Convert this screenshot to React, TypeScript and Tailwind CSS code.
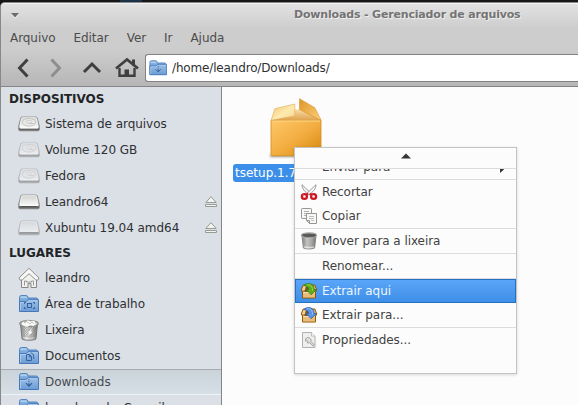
import type { ReactNode } from "react";

function DriveIcon({ faded = false, platter = false }: { faded?: boolean; platter?: boolean }) {
  return (
    <svg width="24" height="24" viewBox="0 0 24 24" className={faded ? "opacity-50" : ""}>
      <defs>
        <linearGradient id="driveTop" x1="0" y1="0" x2="0" y2="1">
          <stop offset="0" stopColor="#d2d2d0" />
          <stop offset="1" stopColor="#fafaf9" />
        </linearGradient>
        <linearGradient id="driveBase" x1="0" y1="0" x2="0" y2="1">
          <stop offset="0" stopColor="#c5c5c3" />
          <stop offset="1" stopColor="#5c5d5b" />
        </linearGradient>
      </defs>
      <path d="M5.200 5h13.600c.8 0 1.200.3 1.500 1l2 8v3.500c0 .8-.4 1.300-1.300 1.300H3c-.9 0-1.300-.5-1.300-1.300V14l2-8c.3-.7.700-1 1.500-1z" fill="url(#driveBase)" stroke="#858684" strokeWidth=".8" />
      <path d="M5.500 5.700h13c.5 0 .8.200 1 .8l1.800 8c.2 1-.2 1.500-1 1.500H3.700c-.8 0-1.200-.5-1-1.500l1.800-8c.2-.6.500-.8 1-.8z" fill="url(#driveTop)" stroke="#fff" strokeWidth=".7" />
      {platter && (
        <g fill="none" stroke="#b8b8b6" strokeWidth=".7">
          <ellipse cx="12" cy="10.300" rx="6.800" ry="3.800" fill="#e9e9e8" />
          <ellipse cx="12" cy="9.700" rx="3" ry="1.400" stroke="#c5c5c3" />
          <path d="M12 11.500h5" />
        </g>
      )}
      <path d="M3.200 16.500h17.600" stroke={platter ? "#c4c4c2" : "#4c4d4b"} strokeWidth=".9" />
    </svg>
  );
}

function EjectIcon() {
  return (
    <svg width="14" height="14" viewBox="0 0 14 14" fill="#f3f3ef" stroke="#999b94" strokeWidth="1">
      <path d="M7 1.700l5.200 5.800H1.800z" />
      <path d="M1.500 9.500h11v2h-11z" />
    </svg>
  );
}

function HomePlaceIcon() {
  return (
    <svg width="24" height="24" viewBox="0 0 24 24" strokeLinejoin="round">
      <path d="M4.500 13v8.500H11v-4h3v4h5.500V13L12 6z" fill="#f1f1ef" stroke="#858783" />
      <path d="M7.500 19.500v-4.500h2v1h5v-1h2v4.500" fill="none" stroke="#8e908b" strokeWidth=".9" />
      <path d="M12 2.300L2 12l1.300 2.300 2-.5L12 7.700l6.700 6.100 2 .5L22 12z" fill="#f8f8f6" stroke="#8e908b" />
    </svg>
  );
}

type FolderKind = "desktop" | "documents" | "downloads" | "plain";

function FolderIcon({ kind, small = false }: { kind: FolderKind; small?: boolean }) {
  const size = small ? 18 : 24;
  return (
    <svg width={size} height={size} viewBox={small ? "1.500 2.300 20.500 19" : "0 0 24 24"}>
      <defs>
        <linearGradient id="folderFront" x1="0" y1="0" x2="0" y2="1">
          <stop offset="0" stopColor="#9dc0e8" />
          <stop offset="1" stopColor="#6b9bd3" />
        </linearGradient>
      </defs>
      <path d="M2.500 19V5.500c0-1.200.6-2 1.800-2h4.900c1 0 1.800 1 1.800 2.500h8.500c.8 0 1 .5 1 1.200V19z" fill="#7ca9dc" stroke="#4b7bb8" strokeWidth=".9" />
      <path d="M3.300 6.300V5c0-.4.400-.7.900-.7h4.700c.7 0 1.200.8 1.400 2z" fill="#a9cfea" />
      <path d="M2.500 9.500h6.300c1.200 0 1.700-1.800 3-1.800h9.700v11.800h-19z" fill="url(#folderFront)" stroke="#3f73b4" strokeWidth=".9" />
      <path d="M3.500 18.500v-8h5.600c1.400 0 1.700-1.800 3-1.800h8.400" fill="none" stroke="#bdd6f2" strokeWidth=".7" />
      {kind === "downloads" && (
        <path d="M12 9.200v1M12 11.200v1M12 13.200v3M9 13.200l3 3 3-3" fill="none" stroke="#2f5c98" strokeWidth="1.050" />
      )}
      {kind === "desktop" && (
        <g fill="none" stroke="#2f5c98" strokeWidth=".9">
          <path d="M7.500 12v-1.500H9M17.500 12v-1.500H16M7.500 15v1.500H9M17.500 15v1.500H16" />
          <rect x="10.500" y="11.500" width="4" height="4" />
        </g>
      )}
      {kind === "documents" && (
        <path d="M9.500 10.500h3l2 2v4h-5zM12.300 10.500v2.300h2.200M13.500 8.900c2.200 0 3.200 1.500 3.200 3.900v2.200" fill="none" stroke="#2f5c98" strokeWidth=".9" />
      )}
    </svg>
  );
}

function TrashIcon({ full = false }: { full?: boolean }) {
  return (
    <svg width={full ? 24 : 18} height={full ? 24 : 18} viewBox={full ? "0 0 24 24" : "1 1.500 22 22"}>
      <defs>
        <linearGradient id="binBody">
          <stop offset="0" stopColor="#8a8a89" />
          <stop offset=".35" stopColor="#f0f0ef" />
          <stop offset=".7" stopColor="#c4c4c2" />
          <stop offset="1" stopColor="#777" />
        </linearGradient>
        <pattern id="binMesh" width="2.400" height="2.400" patternUnits="userSpaceOnUse">
          <path d="M0 0l2.400 2.400M2.400 0L0 2.400" stroke="#666" strokeWidth=".4" />
        </pattern>
      </defs>
      <path d="M3.500 6l1.600 15c1.700 1.600 12.200 1.600 13.800 0l1.600-15z" fill="url(#binBody)" stroke="#6b6c6a" strokeWidth=".9" />
      <path d="M4.800 9l1.200 9.500c2 1.300 10.500 1.300 12.300 0L19.300 9z" fill="url(#binMesh)" />
      <ellipse cx="12" cy="5.500" rx="9.200" ry="2.900" fill={full ? "#e6e6e3" : "#5a5b59"} stroke={full ? "#858783" : "#a1a2a0"} strokeWidth="1.300" />
      {full ? (
        <g stroke="#999a96" strokeWidth=".6" fill="#fbfbf9">
          <path d="M4 6.500l1.500-3 3 .3 2-1.800 3 1 4-.8 2 4.300-3 1.700-3.500-.5-3 1.500-3-1z" />
          <path d="M7 5l3-1.500L13 6l2-2 2 1.500" fill="none" />
          <path d="M15 10l-4 4.500 1.500.5-2 3.500 5-4.500-1.700-.6z" stroke="none" />
        </g>
      ) : (
        <path d="M5.500 19.700c2 1.300 11 1.300 13 0" fill="none" stroke="#e0e0de" />
      )}
    </svg>
  );
}

function BoxIcon() {
  return (
    <svg width="56" height="64" viewBox="0 0 56 64" className="block">
      <defs>
        <linearGradient id="boxFront" x1="0" y1="0" x2="1" y2="1">
          <stop offset="0" stopColor="#ffc669" />
          <stop offset=".5" stopColor="#f3ae42" />
          <stop offset="1" stopColor="#d5860b" />
        </linearGradient>
        <linearGradient id="flapLeft" x1="0" y1="0" x2="1" y2="1">
          <stop offset="0" stopColor="#f4c66d" />
          <stop offset=".55" stopColor="#fdeab0" />
          <stop offset="1" stopColor="#f5d58c" />
        </linearGradient>
        <linearGradient id="flapRight" x1="0" y1="0" x2="1" y2="1">
          <stop offset="0" stopColor="#dc9526" />
          <stop offset="1" stopColor="#ffd07c" />
        </linearGradient>
        <linearGradient id="boxInside" x1="0" y1="0" x2="0" y2="1">
          <stop offset="0" stopColor="#f8dda6" />
          <stop offset="1" stopColor="#dfa14a" />
        </linearGradient>
        <filter id="boxShade" x="-.2" y="-2" width="1.400" height="5">
          <feGaussianBlur stdDeviation="1" />
        </filter>
      </defs>
      <rect x="2" y="57.500" width="51" height="2.500" fill="#444" opacity=".55" filter="url(#boxShade)" />
      <path d="M3 23.500l5-11h37l8 11z" fill="url(#boxInside)" />
      <path d="M3 23.500h50v34c0 .8-.5 1.300-1.300 1.300H4.300c-.8 0-1.300-.5-1.300-1.300z" fill="url(#boxFront)" stroke="#d88b19" strokeWidth=".8" />
      <path d="M4 24h48" stroke="#ffdc90" />
      <path d="M6.800 11.700l20-4.700v12L3.200 23.300z" fill="url(#flapLeft)" stroke="#dfab56" strokeWidth=".6" />
      <path d="M31.500 1.700l15.300 9L53.200 23.300 31.500 12.500z" fill="url(#flapRight)" stroke="#d8942c" strokeWidth=".6" />
    </svg>
  );
}

function ScissorsIcon() {
  return (
    <svg width="18" height="18" viewBox="0 0 18 18" className="block">
      <path d="M2 1.700l9 8.600-1.700 1.500C5.200 9.300 2 6 2 1.700z" fill="#f1f1ef" stroke="#90928d" strokeWidth=".9" />
      <path d="M16 1.700l-9 8.600 1.700 1.500C12.800 9.300 16 6 16 1.700z" fill="#f8f8f6" stroke="#90928d" strokeWidth=".9" />
      <g fill="none" stroke="#cf1620" strokeWidth="2.300">
        <ellipse cx="4.400" cy="13.500" rx="2.500" ry="2.400" />
        <ellipse cx="13.600" cy="13.500" rx="2.500" ry="2.400" />
        <path d="M6 11.800l2.200-1.300M12 11.800l-2.200-1.300" strokeWidth="1.800" />
      </g>
      <path d="M2.600 12.500l1-.8M11.800 12.500l1-.8" stroke="#ff7b7b" strokeWidth=".8" />
    </svg>
  );
}

function CopyIcon() {
  return (
    <svg width="18" height="18" viewBox="0 0 18 18" className="block" fill="#f8f8f7" stroke="#969893">
      <rect x="1.500" y="1.500" width="10" height="10" rx=".7" />
      <path d="M4 4.500h5M4 6.500h4M4 8.500h3" stroke="#b3b4b1" />
      <path d="M6.500 6.500h10v10h-7l-3-3z" />
      <path d="M9 9.500h5M9 11.500h5M11 13.500h3" stroke="#bebfbc" />
      <path d="M6.500 13.500h3v3z" fill="#ddd" />
    </svg>
  );
}

function ExtractIcon({ green = false }: { green?: boolean }) {
  return (
    <svg width="18" height="18" viewBox="0 0 18 18" className="block">
      <path d="M3.200 3h11.600l2 5-1.300 2v6h-13v-6L1.200 8z" fill="#c48a3a" stroke="#8f5902" strokeLinejoin="round" />
      <path d="M4.500 4.500h9V10h-9z" fill="#7b571f" />
      <path d="M3.500 3.700L1.800 8.200h3l1.200-4.500zM14.500 3.700l1.700 4.500h-3L12 3.700z" fill="#efcf98" />
      <path d="M3 10h12v5.500H3z" fill="#e8bd7b" />
      <path d="M3.500 10.500h11" stroke="#fae3ba" />
      <path
        d="M4 3.500C6 .5 13.500.8 14 6v1.500h2.300L11.200 12.700 6 7.500h2.700C8.700 5 6.500 3.800 4 3.500z"
        fill={green ? "#5fae20" : "#5c93e8"}
        stroke={green ? "#2f7a0c" : "#2a5fb0"}
        strokeWidth=".8"
      />
      <path d="M6.500 3c3-.8 5.500.5 6 3.500v2" fill="none" stroke={green ? "#a2e45b" : "#a4caff"} strokeWidth=".8" />
    </svg>
  );
}

function PropertiesIcon() {
  return (
    <svg width="18" height="18" viewBox="0 0 18 18" className="block">
      <path d="M2.500 1.500h9l3.500 3.500v11.500H2.500z" fill="#eeeeed" stroke="#b0b1ae" />
      <path d="M11.500 1.500V5H15" fill="#fff" stroke="#bcbdba" />
      <path d="M7.500 6.500c-1.800.5-2.500 2.300-1.700 3.800l1-.8 1.200 1.200-.8 1c1 .5 1.900.3 2.600-.1l3.300 3.500 1.300-1.200-3.400-3.400c.5-1.800-.7-3.900-3.500-4z" fill="#e2e2e1" stroke="#979994" strokeWidth=".9" />
    </svg>
  );
}

function PlaceRow({ icon, label, eject = false, selected = false }: { icon: ReactNode; label: string; eject?: boolean; selected?: boolean }) {
  return (
    <div
      className={
        "flex h-[26px] shrink-0 items-center pl-[16px] pr-[3px] " +
        (selected ? "border-y border-t-[#a5abb0] border-b-[#f0f3f5] bg-linear-to-b from-[#cbd3da] to-[#d7dfe6] text-[#484b4e]" : "")
      }
    >
      <span className="w-[28px] shrink-0">{icon}</span>
      <span className="flex-1 whitespace-nowrap">{label}</span>
      {eject && <EjectIcon />}
    </div>
  );
}

function MenuItem({ icon, label, selected = false }: { icon?: ReactNode; label: string; selected?: boolean }) {
  return (
    <div
      className={
        "flex h-[24px] shrink-0 items-center " +
        (selected ? "bg-linear-to-b from-[#5aa6fa] to-[#3e8ee6] text-[#eef6ff] outline outline-1 -outline-offset-1 outline-[#2470c4]" : "")
      }
    >
      <span className="w-[27px] shrink-0 pl-[5px]">{icon}</span>
      <span className="whitespace-nowrap">{label}</span>
    </div>
  );
}

function Separator() {
  return <div className="h-px shrink-0 bg-[#dcdcdc]" />;
}

function ContextMenu() {
  return (
    <div className="absolute left-[294px] top-[147px] flex h-[227px] w-[223px] flex-col overflow-hidden border border-[#c3c3c3] bg-[#fcfcfc] tracking-[-0.06px] text-[#424242] shadow-[0_1px_3px_rgba(0,0,0,0.15)]">
      <div className="flex h-[20px] shrink-0 justify-center pt-[5px]">
        <svg width="10" height="6" viewBox="0 0 10 6"><path d="M5 .5L10 5.500H0z" fill="#353535" /></svg>
      </div>
      <Separator />
      <div className="flex h-[10px] shrink-0 items-end justify-between overflow-hidden pb-[5px] pl-[27px] pr-[12px] leading-[14px]">
        <span>Enviar para</span>
        <svg width="4" height="8" viewBox="0 0 4 8"><path d="M0 0l4 3.500L0 7z" fill="#353535" /></svg>
      </div>
      <Separator />
      <MenuItem icon={<ScissorsIcon />} label="Recortar" />
      <MenuItem icon={<CopyIcon />} label="Copiar" />
      <Separator />
      <MenuItem icon={<TrashIcon />} label="Mover para a lixeira" />
      <Separator />
      <MenuItem label="Renomear..." />
      <Separator />
      <MenuItem icon={<ExtractIcon green />} label="Extrair aqui" selected />
      <MenuItem icon={<ExtractIcon />} label="Extrair para..." />
      <Separator />
      <MenuItem icon={<PropertiesIcon />} label="Propriedades..." />
    </div>
  );
}

export default function App() {
  return (
    <div className="relative flex h-[405px] w-[578px] flex-col overflow-hidden bg-[#171819] font-['DejaVu_Sans',sans-serif] text-[12px] leading-[16px] text-[#2e3133]">
      <div className="flex h-[2px] shrink-0">
        <div className="w-[120px]" />
        <div className="w-[22px] bg-[#1c3347]" />
      </div>
      <div className="flex min-h-0 flex-1 flex-col rounded-tl-[5px] border-l border-t border-[#888] bg-[#cdcdcd]">
        <header className="flex h-[24px] shrink-0 items-center rounded-tl-[4px] border-t border-[#f4f4f4] bg-linear-to-b from-[#e2e2e2] to-[#cecece] pl-[10px]">
          <svg width="8" height="6" viewBox="0 0 8 6">
            <path d="M0 1h8L4 5.500z" fill="#f4f4f4" />
            <path d="M0 0h8L4 4.500z" fill="#6c6c6c" />
          </svg>
          <h1 className="ml-[275px] whitespace-nowrap pb-px text-[11px] font-bold tracking-[-0.17px] text-[#747474] [text-shadow:1px_1px_0_#eee]">
            Downloads - Gerenciador de arquivos
          </h1>
        </header>
        <nav className="flex h-[22px] shrink-0 items-center gap-[18px] pl-[9px] tracking-[-0.06px] text-[#4c4c4c]">
          <span>Arquivo</span>
          <span>Editar</span>
          <span>Ver</span>
          <span>Ir</span>
          <span>Ajuda</span>
        </nav>
        <div className="flex h-[37px] shrink-0 items-center bg-linear-to-b from-[#cdcdcd] to-[#b6b6b6] pl-[12px]">
          <svg width="132" height="26" viewBox="0 0 132 26" fill="none" stroke="#3f3f3f" strokeWidth="3">
            <path d="M14.500 4.500L6.500 13l8 8.500" />
            <path d="M38.500 4.500l8 8.500-8 8.500" stroke="#8e8e8e" />
            <path d="M71 17l8-8 8 8" />
            <path d="M103 13.500l11-9 11 9" strokeWidth="2.800" />
            <path d="M106.500 13v7.800h15V13" strokeWidth="2.400" />
            <path d="M111.500 14.500h4.500V21h-4.500zM119 4.500h3v6h-3z" fill="#3f3f3f" stroke="none" />
          </svg>
          <div className="flex h-[28px] flex-1 items-center rounded-l-[3px] border border-r-0 border-[#838383] bg-white pl-[3px]">
            <FolderIcon kind="downloads" small />
            <span className="ml-[5px] tracking-[-0.16px]">/home/leandro/Downloads/</span>
          </div>
        </div>
        <div className="flex min-h-0 flex-1 border-t border-[#858585]">
          <aside className="flex w-[221px] shrink-0 flex-col overflow-hidden border-r border-[#858585] bg-[#dbdfe6] tracking-[-0.03px]">
            <h2 className="flex h-[24px] shrink-0 items-center pl-[8px] font-bold text-[#222426]">DISPOSITIVOS</h2>
            <PlaceRow icon={<DriveIcon platter />} label="Sistema de arquivos" />
            <PlaceRow icon={<DriveIcon platter faded />} label="Volume 120 GB" />
            <PlaceRow icon={<DriveIcon platter faded />} label="Fedora" />
            <PlaceRow icon={<DriveIcon />} label="Leandro64" eject />
            <PlaceRow icon={<DriveIcon faded />} label="Xubuntu 19.04 amd64" eject />
            <h2 className="flex h-[24px] shrink-0 items-center pl-[8px] font-bold text-[#222426]">LUGARES</h2>
            <PlaceRow icon={<HomePlaceIcon />} label="leandro" />
            <PlaceRow icon={<FolderIcon kind="desktop" />} label="Área de trabalho" />
            <PlaceRow icon={<TrashIcon full />} label="Lixeira" />
            <PlaceRow icon={<FolderIcon kind="documents" />} label="Documentos" />
            <PlaceRow icon={<FolderIcon kind="downloads" />} label="Downloads" selected />
            <PlaceRow icon={<FolderIcon kind="plain" />} label="leandroredesCompil" />
          </aside>
          <main className="flex-1 bg-[#fcfcfc] pl-[11px] pt-[10px]">
            <div className="flex w-[125px] flex-col items-center">
              <BoxIcon />
              <span className="mt-[3px] h-[18px] w-full overflow-hidden whitespace-nowrap rounded-[3px] bg-[#3c8fe9] pl-[2px] leading-[18px] text-white">
                tsetup.1.7.0.tar.xz
              </span>
            </div>
          </main>
        </div>
      </div>
      <ContextMenu />
    </div>
  );
}
